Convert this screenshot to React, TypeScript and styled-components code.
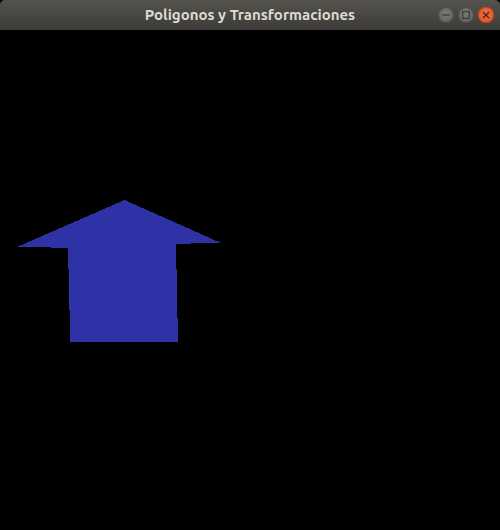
import React from "react";
import styled, { createGlobalStyle } from "styled-components";

const Global = createGlobalStyle`
  html, body { margin: 0; padding: 0; background: #000; }
  #root { width: 500px; height: 530px; }
`;

const Window = styled.div`
  width: 500px;
  height: 530px;
  display: flex;
  flex-direction: column;
  background: #000;
`;

const TitleBar = styled.div`
  height: 30px;
  flex: 0 0 30px;
  position: relative;
  display: flex;
  align-items: center;
  justify-content: center;
  background: linear-gradient(#55534e, #3c3b37);
  border-radius: 5px 5px 0 0;
  box-sizing: border-box;
`;

const Title = styled.span`
  font-family: "Ubuntu", "Open Sans", "DejaVu Sans", sans-serif;
  font-weight: 700;
  font-size: 15px;
  line-height: 30px;
  color: #dfdbd2;
`;

const Buttons = styled.div`
  position: absolute;
  right: 6px;
  top: 7px;
  display: flex;
  gap: 4px;
`;

const Btn = styled.div<{ $close?: boolean }>`
  width: 16px;
  height: 16px;
  border-radius: 50%;
  display: flex;
  align-items: center;
  justify-content: center;
  background: ${(p) =>
    p.$close
      ? "radial-gradient(circle at 50% 40%, #f26d3d, #e0501f)"
      : "radial-gradient(circle at 50% 40%, #7b7a75, #5c5b56)"};
  box-shadow: inset 0 0 0 1px ${(p) => (p.$close ? "#c9441a" : "#4a4945")};
`;

const Canvas = styled.div`
  flex: 1;
  background: #000;
`;

export default function App() {
  return (
    <>
      <Global />
      <Window>
        <TitleBar>
          <Title>Poligonos y Transformaciones</Title>
          <Buttons>
            <Btn>
              <svg width="8" height="8" viewBox="0 0 8 8">
                <line x1="0.5" y1="4" x2="7.5" y2="4" stroke="#3a3935" strokeWidth="1.3" />
              </svg>
            </Btn>
            <Btn>
              <svg width="8" height="8" viewBox="0 0 8 8">
                <rect x="0.7" y="0.7" width="6.6" height="6.6" fill="none" stroke="#3a3935" strokeWidth="1.2" />
              </svg>
            </Btn>
            <Btn $close>
              <svg width="8" height="8" viewBox="0 0 8 8">
                <path d="M1 1 L7 7 M7 1 L1 7" stroke="#3a2a20" strokeWidth="1.3" />
              </svg>
            </Btn>
          </Buttons>
        </TitleBar>
        <Canvas>
          <svg width="500" height="500" viewBox="0 30 500 500" shapeRendering="crispEdges">
            <polygon
              points="124.5,200 220,242.5 176,244 178,341.7 70.3,341.7 68,248 18,246.5"
              fill="#2e32a6"
            />
          </svg>
        </Canvas>
      </Window>
    </>
  );
}
